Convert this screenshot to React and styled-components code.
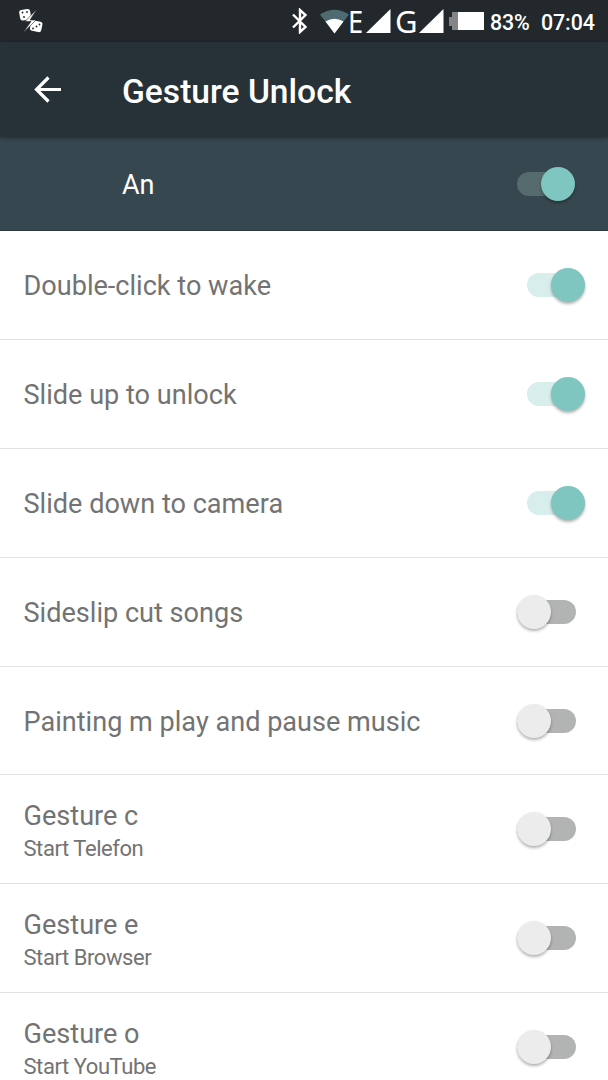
import React from 'react'
import styled, { createGlobalStyle, css } from 'styled-components'

const colors = {
  statusBar: '#22282b',
  appBar: '#273238',
  switchBar: '#37474f',
  accent: '#7fc6c0',
  text: '#737373',
  divider: '#e3e3e3',
}

const gestures = [
  { title: 'Double-click to wake', checked: true },
  { title: 'Slide up to unlock', checked: true },
  { title: 'Slide down to camera', checked: true },
  { title: 'Sideslip cut songs' },
  { title: 'Painting m play and pause music' },
  { title: 'Gesture c', summary: 'Start Telefon' },
  { title: 'Gesture e', summary: 'Start Browser' },
  { title: 'Gesture o', summary: 'Start YouTube' },
]

const GlobalStyle = createGlobalStyle`
  * {
    box-sizing: border-box;
  }
  body {
    margin: 0;
    overflow: hidden;
    background: #fff;
    font-family: Roboto, sans-serif;
  }
`

const Screen = styled.div`
  display: flex;
  flex-direction: column;
  width: 608px;
  height: 1080px;
  overflow: hidden;
  background: #fff;
`

const StatusBar = styled.div`
  display: flex;
  align-items: center;
  flex: none;
  height: 42px;
  padding: 0 14px 0 18px;
  color: #fff;
  background: ${colors.statusBar};
  svg {
    display: block;
    flex: none;
  }
`

const StatusIcons = styled.div`
  display: flex;
  align-items: center;
  margin-left: auto;
`

const BluetoothIcon = styled.svg`
  margin-right: 12px;
`

const NetworkType = styled.span`
  width: ${props => props.$width}px;
  margin-left: ${props => props.$gap || 0}px;
  font-family: 'Noto Sans', sans-serif;
  font-size: 31px;
  line-height: 42px;
  transform: scaleX(${props => props.$stretch || 1});
  transform-origin: left;
`

const StatusText = styled.span`
  width: ${props => props.$width}px;
  margin-left: ${props => props.$gap}px;
  padding-top: 3px;
  font-size: 21.4px;
  font-weight: 500;
  line-height: 40px;
  letter-spacing: -0.1px;
  white-space: nowrap;
`

const AppBar = styled.header`
  position: relative;
  display: flex;
  align-items: center;
  flex: none;
  height: 95px;
  padding-left: 34px;
  color: #fff;
  background: ${colors.appBar};
  box-shadow: 0 1px 4px rgba(0, 0, 0, 0.4);
`

const BackButton = styled.button`
  width: 88px;
  height: 28px;
  padding: 0;
  border: 0;
  background: none;
  svg {
    display: block;
  }
`

const Title = styled.h1`
  margin: 4px 0 0;
  font-size: 33.6px;
  font-weight: 500;
  line-height: 40px;
`

const SwitchBar = styled.div`
  display: flex;
  align-items: center;
  justify-content: space-between;
  flex: none;
  height: 94px;
  padding: 0 33px 0 122px;
  color: #fff;
  background: ${colors.switchBar};
  border-bottom: 1px solid #2b3a42;
  font-size: 27px;
`

const SwitchLabel = styled.span`
  padding-top: 2px;
`

const Toggle = styled.span`
  position: relative;
  flex: none;
  width: ${props => (props.$checked ? 58 : 59)}px;
  height: 24px;
  border-radius: 12px;
  background: ${props => (props.$checked ? '#d8eeec' : '#b2b4b3')};
  ${props => props.$dark && css`
    background: #566b6e;
  `}
  &::after {
    content: '';
    position: absolute;
    top: -5px;
    left: ${props => (props.$checked ? 24 : 0)}px;
    width: 34px;
    height: 34px;
    border-radius: 50%;
    background: ${props => (props.$checked ? colors.accent : '#ececec')};
    box-shadow: 0 2px 3px rgba(0, 0, 0, 0.3);
  }
`

const Row = styled.li`
  display: flex;
  align-items: center;
  justify-content: space-between;
  height: 108.9px;
  padding: ${props => (props.$twoLines ? 0 : 1)}px ${props => (props.$checked ? 23 : 32)}px 0 23.5px;
  border-bottom: 1px solid ${colors.divider};
`

const List = styled.ul`
  flex: none;
  margin: 0;
  padding: 0;
  list-style: none;
`

const RowText = styled.div`
  padding-top: ${props => (props.$twoLines ? 5 : 2)}px;
  color: ${colors.text};
`

const RowTitle = styled.div`
  font-size: 27.1px;
  line-height: 34px;
`

const RowSummary = styled.div`
  font-size: 22px;
  line-height: 32px;
  letter-spacing: -0.44px;
`

const DiceIcon = () => (
  <svg width="26" height="26" viewBox="0 0 26 26">
    <g fill="#fff">
      <rect x="1.5" y="1.5" width="11" height="10.5" rx="2.5" transform="rotate(-10 7 6)" />
      <rect x="12.5" y="13" width="11.5" height="10.5" rx="2.5" transform="rotate(12 18 18)" />
      <path d="M19 1 7 13.5h6L5 25l13-13h-6z" stroke="#22282b" strokeWidth="0.6" />
    </g>
    <g fill="#22282b">
      <circle cx="4.5" cy="4.5" r="0.9" />
      <circle cx="9" cy="4" r="0.9" />
      <circle cx="6" cy="9" r="0.9" />
      <circle cx="15" cy="20.5" r="0.9" />
      <circle cx="18.5" cy="18.5" r="0.9" />
      <circle cx="21.5" cy="16.5" r="0.9" />
    </g>
  </svg>
)

const Signal = () => (
  <svg width="25" height="25" viewBox="0 0 25 25">
    <path d="M0 24 24.5 0v24z" fill="#fff" />
  </svg>
)

const App = () => (
  <Screen>
    <GlobalStyle />
    <StatusBar>
      <DiceIcon />
      <StatusIcons>
        <BluetoothIcon width="16" height="26" viewBox="0 0 16 26" fill="none" stroke="#fff" strokeWidth="2.4">
          <path d="m1 6.5 12.5 12.5L8 24V2l5.5 5L1 19.5" />
        </BluetoothIcon>
        <svg width="28" height="25" viewBox="0 0 28 25" overflow="visible">
          <path d="M0 5.5Q14.5-4 29 5.5L14.5 24.5z" fill="#4f6a70" />
          <path d="M5.5 12.5Q14.5 7 23.5 12.5L14.5 24.5z" fill="#fff" />
        </svg>
        <NetworkType $width={18} $stretch={0.88}>E</NetworkType>
        <Signal />
        <NetworkType $gap={4} $width={24}>G</NetworkType>
        <Signal />
        <svg width="42" height="20" viewBox="0 0 42 20">
          <path d="M5 6h3V1h8v18H8v-4H5z" fill="#858585" />
          <path d="M14 1h26v18H14z" fill="#fff" />
        </svg>
        <StatusText $gap={4} $width={40}>83%</StatusText>
        <StatusText $gap={11} $width={53}>07:04</StatusText>
      </StatusIcons>
    </StatusBar>
    <AppBar>
      <BackButton aria-label="Back">
        <svg width="28" height="28" viewBox="0 0 28 28" fill="none" stroke="#fff" strokeWidth="3.2">
          <path d="M27 13.5H3M14.5 1.5l-12 12 12 12" />
        </svg>
      </BackButton>
      <Title>Gesture Unlock</Title>
    </AppBar>
    <SwitchBar>
      <SwitchLabel>An</SwitchLabel>
      <Toggle $checked $dark />
    </SwitchBar>
    <List>
      {gestures.map(({ title, summary, checked }) => (
        <Row key={title} $checked={checked} $twoLines={Boolean(summary)}>
          <RowText $twoLines={Boolean(summary)}>
            <RowTitle>{title}</RowTitle>
            {summary && <RowSummary>{summary}</RowSummary>}
          </RowText>
          <Toggle $checked={checked} />
        </Row>
      ))}
    </List>
  </Screen>
)

export default App
